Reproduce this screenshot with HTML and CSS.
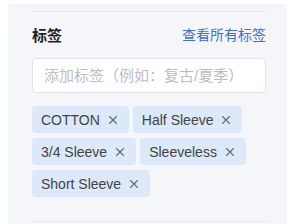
FILE: index.html
```
<!DOCTYPE html>
<html>
<head>
	<title>标签</title>
	<meta charset="utf-8">
	<link rel="stylesheet" href="styles.css">
</head>
<body>

	<div class="panel">
		<div class="section">

			<div class="head">
				<h3 class="title">标签</h3>
				<a class="more" href="#">查看所有标签</a>
			</div>

			<input class="tag-input" type="text" placeholder="添加标签（例如：复古/夏季）">

			<div class="tags">
				<span class="tag">COTTON<svg class="x" viewBox="0 0 8 8"><path d="M1 1L7 7M7 1L1 7"/></svg></span>
				<span class="tag">Half Sleeve<svg class="x" viewBox="0 0 8 8"><path d="M1 1L7 7M7 1L1 7"/></svg></span>
				<span class="tag">3/4 Sleeve<svg class="x" viewBox="0 0 8 8"><path d="M1 1L7 7M7 1L1 7"/></svg></span>
				<span class="tag">Sleeveless<svg class="x" viewBox="0 0 8 8"><path d="M1 1L7 7M7 1L1 7"/></svg></span>
				<span class="tag">Short Sleeve<svg class="x" viewBox="0 0 8 8"><path d="M1 1L7 7M7 1L1 7"/></svg></span>
			</div>

		</div>
	</div>

</body>
</html>
```

FILE: styles.css
```
* {
	box-sizing: border-box;
	font-family: "Liberation Sans", "Noto Sans CJK SC", sans-serif;
}

body {
	margin: 0 8px;
	background: #fff;
}

.panel {
	margin-top: 4px;
	height: 220px;
	background-color: #f5f6fa;
	padding: 7px 21px 0 24px;
}

.section {
	border-top: 1px solid #e8e9ef;
	border-bottom: 1px solid #e8e9ef;
	padding: 12px 0 24px;
}

.head {
	display: flex;
	justify-content: space-between;
	align-items: center;
	height: 20px;
}

.title {
	margin: 0;
	font-size: 15px;
	font-weight: 700;
	color: #222;
}

.more {
	font-size: 14px;
	color: #3a6fd6;
	text-decoration: none;
}

.tag-input {
	display: block;
	width: 100%;
	height: 35px;
	margin-top: 14px;
	padding: 0 11px;
	border: 1px solid #e2e3e8;
	border-radius: 4px;
	background: #fff;
	font-size: 15px;
	outline: none;
}

.tag-input::placeholder {
	color: #bdbdc2;
}

.tags {
	display: flex;
	flex-wrap: wrap;
	gap: 5px 4px;
	margin-top: 13px;
}

.tag {
	display: inline-flex;
	align-items: center;
	height: 27px;
	padding: 0 11px 0 9px;
	border-radius: 4px;
	background-color: #dce9f8;
	color: #444;
	font-size: 14px;
	white-space: nowrap;
}

.x {
	flex: none;
	width: 10px;
	height: 10px;
	margin-left: 8px;
	stroke: #666;
	stroke-width: 0.9;
	fill: none;
}
```
